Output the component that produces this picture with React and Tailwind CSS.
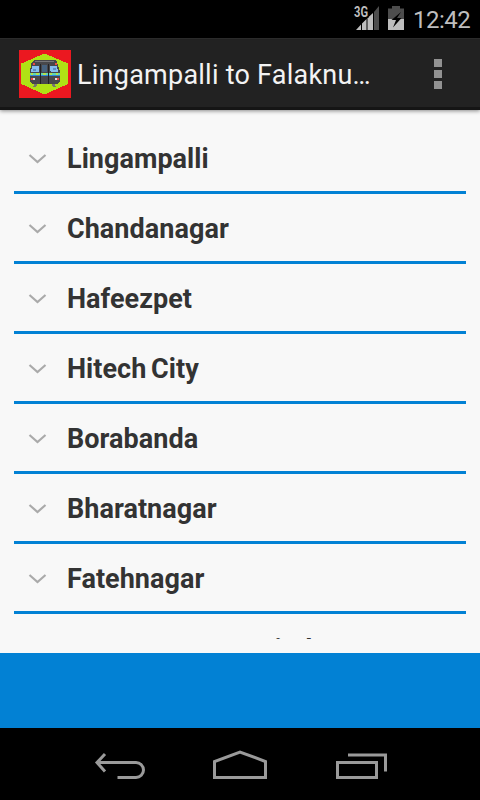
import { useState } from 'react';

const stations = [
  'Lingampalli',
  'Chandanagar',
  'Hafeezpet',
  'Hitech City',
  'Borabanda',
  'Bharatnagar',
  'Fatehnagar',
  'Nature Cure Hospital',
];

function SignalIcon() {
  return (
    <svg width="26" height="24" viewBox="0 0 26 24" className="shrink-0 overflow-visible">
      <path d="M25 0V24H20V6Z" fill="#4d4d4d" />
      <path d="M2 24L7 18.500V24ZM8 24V17.500L12.500 13V24ZM13.500 24V12L19 7V24Z" fill="#bebebe" />
      <path d="M0 0H14.500V12H0Z" fill="#000" />
      <text x="0" y="11" fontSize="14" fontWeight="700" fill="#bebebe" textLength="14" lengthAdjust="spacingAndGlyphs">3G</text>
    </svg>
  );
}

function BatteryIcon() {
  return (
    <svg width="16" height="24" viewBox="0 0 16 24" className="shrink-0">
      <path d="M4 0H12V2.500H16V13H0V2.500H4Z" fill="#4d4d4d" />
      <path d="M0 13H16V24H0Z" fill="#bebebe" />
      <path d="M13 6L3.500 14H8L5 21.500L13.500 12H9Z" fill="#000" />
    </svg>
  );
}

function StatusBar() {
  return (
    <div className="flex h-[38px] shrink-0 items-start bg-black pt-[6px] pl-[354px] text-[#bebebe]">
      <SignalIcon />
      <div className="w-2" />
      <BatteryIcon />
      <div className="mt-[2px] ml-[9px] text-[24px] leading-6 tracking-[-0.5px] whitespace-nowrap">12:42</div>
    </div>
  );
}

function TrainLogo() {
  return (
    <svg width="52" height="48" viewBox="0 0 52 48" className="shrink-0" shapeRendering="crispEdges">
      <path d="M0 0H52V48H0Z" fill="#eb1820" />
      <path d="M25.500 3.500L49 13.500V34L25.500 44.500L2.200 34V13.500Z" fill="#b0e215" />
      {/* couplers */}
      <path d="M18 33L15 37M33 33L36 37" stroke="#77776f" strokeWidth="2.500" />
      {/* body */}
      <path d="M15 10H36L38 12L39 15L41 22V31L39 34H13L11 31V22L12 15L13 12Z" fill="#48484b" />
      <path d="M16 11H35V12H16Z" fill="#77777a" />
      {/* windows */}
      <path d="M13 16H20V21L19 22H12ZM31 16H38L39 22H32L31 21Z" fill="#86bdf0" />
      <path d="M14 19H17V21H14ZM34 18H37V20H34Z" fill="#5b8fc4" />
      <path d="M23 15H28V22H23Z" fill="#47627f" />
      {/* stripes */}
      <path d="M11 23H41V25H11Z" fill="#62d8b0" />
      <path d="M12 23H14V25H12ZM17 23H20V25H17ZM24 23H27V25H24ZM31 23H33V25H31ZM37 23H39V25H37Z" fill="#b4e34e" />
      <path d="M11 25H41V26H11Z" fill="#3187dc" />
      <path d="M21.500 14V34M29.500 14V34" stroke="#222226" strokeWidth="1" />
      {/* lamps */}
      <path d="M14 13H16V15H14ZM36 13H38V15H36ZM12 28H14V30H12ZM38 28H40V30H38Z" fill="#ef4a44" />
      <path d="M14 28H16V30H14ZM36 28H38V30H36Z" fill="#ddd" />
    </svg>
  );
}

function ActionBar({ title }) {
  return (
    <header className="flex h-[72px] shrink-0 items-center border-t border-b-[3px] border-t-[#2b2b2b] border-b-[#151515] bg-[#222] pt-[2px] pl-[19px] shadow-[0_1px_4px_rgba(0,0,0,0.45)]">
      <TrainLogo />
      <h1 className="mt-[2px] ml-[6px] w-[301px] text-[27px] leading-8 tracking-[0.24px] whitespace-nowrap text-[#f3f3f3]">{title}</h1>
      <button className="ml-14 flex flex-col gap-[3px]" aria-label="More options">
        <span className="size-2 bg-[#929292]" />
        <span className="size-2 bg-[#929292]" />
        <span className="size-2 bg-[#929292]" />
      </button>
    </header>
  );
}

function StationRow({ name, open, onToggle }) {
  return (
    <li className="h-[70px] border-b-[3px] border-[#0281d4] [word-spacing:-2px] last:pt-[2px] last:[word-spacing:-4.5px]">
      <button onClick={onToggle} aria-expanded={open} className="flex h-full w-full items-center pt-[3px] pl-[14px] text-left [word-spacing:inherit]">
        <svg width="20" height="12" viewBox="0 0 20 12" fill="none" className="shrink-0">
          <path d="M1.500 2L9.500 9L17.500 2" stroke="#aaa" strokeWidth="2.200" />
        </svg>
        <span className="ml-[19px] text-[27px] leading-8 font-bold tracking-[0.04px] whitespace-nowrap text-[#333]">{name}</span>
      </button>
    </li>
  );
}

function NavBar() {
  return (
    <nav className="flex h-[72px] shrink-0 bg-black">
      <svg width="480" height="72" viewBox="0 0 480 72" fill="none" stroke="#9a9a9a" strokeWidth="3">
        <path d="M105 26L97 34.500L105 43.500M97 34.500H136A7.500 7.500 0 0 1 136 49.500H117.500" />
        <path d="M214.500 49.500V33.500L240 24L265.500 33.500V49.500Z" />
        <path d="M337.500 34.500H376.500V49.500H337.500ZM348 27H385.500V43.500" />
      </svg>
    </nav>
  );
}

export default function App() {
  const [open, setOpen] = useState(null);

  return (
    <div className="flex h-[800px] w-[480px] flex-col overflow-hidden bg-[#f8f8f8] font-[Roboto,sans-serif]">
      <StatusBar />
      <ActionBar title="Lingampalli to Falaknu…" />
      <main className="min-h-0 flex-1 p-[14px]">
        <ul className="h-full overflow-hidden">
          {stations.map((name) => (
            <StationRow
              key={name}
              name={name}
              open={open === name}
              onToggle={() => setOpen(open === name ? null : name)}
            />
          ))}
        </ul>
      </main>
      <div className="h-[75px] shrink-0 bg-[#0281d4]" />
      <NavBar />
    </div>
  );
}
